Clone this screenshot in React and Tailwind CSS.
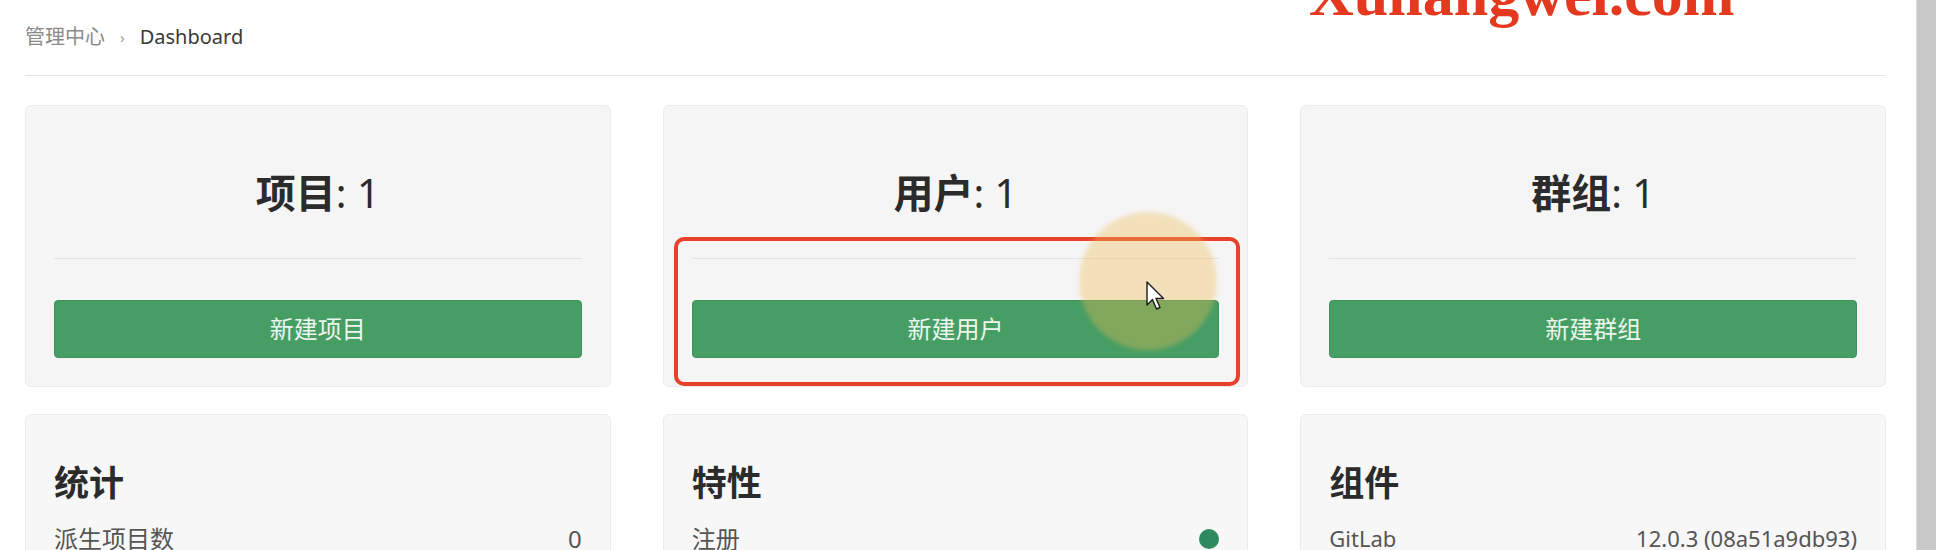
// App.jsx — admin dashboard (管理中心 › Dashboard)

const counters = [
  { label: "项目", value: 1, action: "新建项目" },
  { label: "用户", value: 1, action: "新建用户" },
  { label: "群组", value: 1, action: "新建群组" },
];

function Cursor() {
  return (
    <svg width="22" height="32" viewBox="0 0 22 32" className="block">
      <path d="M1 1 L1 24 L6.5 18.5 L10.5 28 L14 26.5 L10 17.5 L17.5 17.5 Z"
        fill="#ffffff" stroke="#1a1a1a" strokeWidth="1.4" strokeLinejoin="round" />
    </svg>
  );
}

export default function App() {
  return (
    <div className="relative w-[1936px] h-[550px] overflow-hidden bg-white flex font-['Noto_Sans','Noto_Sans_CJK_SC',sans-serif]">

      {/* ── Main column ── */}
      <div className="flex-1 pl-[25px] pr-[30px]">

        {/* Breadcrumb */}
        <div className="pt-[23px] pb-[24px] border-b border-[#e6e6e6] flex items-center h-[76px] text-[20px] leading-[28px]">
          <span className="text-[#8a8a8a]">管理中心</span>
          <span className="text-[#9a9a9a] text-[15px] mx-[15px]">›</span>
          <span className="text-[#3a3a3a]">Dashboard</span>
        </div>

        {/* Counter cards */}
        <div className="grid grid-cols-3 gap-[52px] mt-[29px]">
          {counters.map(c => (
            <div key={c.label} className="bg-[#f5f5f5] border border-[#ececec] rounded-[6px] px-[28px] pt-[28px] pb-[28px]">
              <div className="h-[125px] pb-[6px] border-b border-[#e3e3e3] flex items-center justify-center text-[40px] text-[#2b2b2b] leading-none">
                <span className="font-bold">{c.label}</span>
                <span>: {c.value}</span>
              </div>
              <button className="mt-[41px] w-full h-[58px] rounded-[4px] bg-[#479e65] border border-[#3f925c] text-[#eaf6ee] text-[24px]">
                {c.action}
              </button>
            </div>
          ))}
        </div>

        {/* Info cards */}
        <div className="grid grid-cols-3 gap-[52px] mt-[27px]">
          <div className="bg-[#f7f7f7] border border-[#ececec] rounded-[6px] px-[28px] pt-[42px] h-[300px]">
            <h3 className="text-[35px] font-bold text-[#2b2b2b] leading-[51px]">统计</h3>
            <div className="mt-[14px] flex items-center justify-between text-[24px] leading-[33px] text-[#555]">
              <span>派生项目数</span>
              <span>0</span>
            </div>
          </div>
          <div className="bg-[#f7f7f7] border border-[#ececec] rounded-[6px] px-[28px] pt-[42px] h-[300px]">
            <h3 className="text-[35px] font-bold text-[#2b2b2b] leading-[51px]">特性</h3>
            <div className="mt-[14px] flex items-center justify-between text-[24px] leading-[33px] text-[#555]">
              <span>注册</span>
              <span className="w-[20px] h-[20px] rounded-full bg-[#2f8a60]" />
            </div>
          </div>
          <div className="bg-[#f7f7f7] border border-[#ececec] rounded-[6px] px-[28px] pt-[42px] h-[300px]">
            <h3 className="text-[35px] font-bold text-[#2b2b2b] leading-[51px]">组件</h3>
            <div className="mt-[14px] flex items-center justify-between text-[22px] leading-[33px] text-[#555]">
              <span>GitLab</span>
              <span>12.0.3 (08a51a9db93)</span>
            </div>
          </div>
        </div>
      </div>

      {/* Scrollbar */}
      <div className="w-[20px] shrink-0 bg-[#c9c9c9] border-l border-[#dcdcdc]" />

      {/* ── Video overlays ── */}
      <div className="absolute left-[1309px] top-[-37px] text-[62px] leading-none font-bold text-[#e5391f] font-['Liberation_Serif',serif]">
        Xuliangwei.com
      </div>
      <div className="absolute left-[674px] top-[237px] w-[566px] h-[149px] border-[4px] border-[#e8412b] rounded-[10px]" />
      <div className="absolute left-[1079px] top-[212px] w-[138px] h-[138px] rounded-full bg-[rgba(240,185,80,0.35)] blur-[2px]" />
      <div className="absolute left-[1146px] top-[281px]">
        <Cursor />
      </div>
    </div>
  );
}
